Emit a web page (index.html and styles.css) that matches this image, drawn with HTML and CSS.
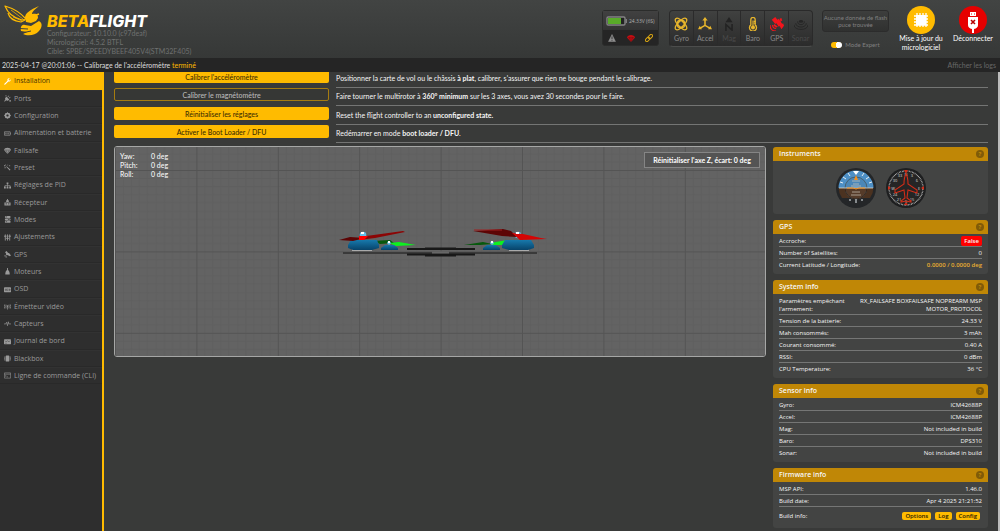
FILE: index.html
```html
<!DOCTYPE html>
<html lang="fr">
<head>
<meta charset="utf-8">
<title>Betaflight Configurator</title>
<link rel="stylesheet" href="styles.css">
</head>
<body>
<header class="topbar">
  <div class="brand">
    <svg class="bee" viewBox="0 0 40 32" aria-hidden="true">
      <g fill="none" stroke="#ffbb00" stroke-width="1.200" stroke-linejoin="round">
        <path d="M1 1 C8 3 15 6 22 14 L18 15 C10 13 4 9 1 1Z"/>
        <path d="M4 8 C5 12 9 16 17 17 L21 15"/>
        <path d="M7 5 L19 14 M9 12 L18 16" stroke-width=".7"/>
      </g>
      <path fill="#ffbb00" d="M21 13 C21 8 26 5 35 1 C30 5 28 7 28 9 C33 8 34 10 34 13 L32 16 L27 18 L22 17Z"/>
      <path fill="#ffbb00" d="M35 16 C39 18 38 23 35 26 C31 31 23 31 19 29 L23 27 L17 26 C16 22 18 19 21 20 L27 21Z"/>
      <path d="M16 23.500 L24 24 M18 28 L27 26" stroke="#3c3e3d" stroke-width="1"/>
      <path d="M29 11 L35 9" stroke="#ffbb00" stroke-width="1.500"/>
    </svg>
    <div>
      <h1 class="wordmark"><span>BETA</span>FLIGHT</h1>
      <p class="versions">Configurateur: 10.10.0 (c97deaf)<br>Micrologiciel: 4.5.2 BTFL<br>Cible: SPBE/SPEEDYBEEF405V4(STM32F405)</p>
    </div>
  </div>
  <div class="power">
    <div class="power-top">
      <svg class="battery" viewBox="0 0 21 10" aria-hidden="true"><rect x="1" y="1" width="18" height="8" rx="1.2" fill="#222" stroke="#858585" stroke-width="1.4"/><rect x="2" y="2" width="13" height="6" fill="#59aa29"/><path d="M20.3 3v4" stroke="#858585" stroke-width="1.2"/></svg>
      <span>24.33V (6S)</span>
    </div>
    <div class="power-bottom">
      <svg viewBox="0 0 16 16" aria-hidden="true"><path d="M8 1 L15 15 H1Z" fill="#8f8f8f" stroke="#8f8f8f" stroke-linejoin="round"/><path d="M8 5v5M8 11.5v2" stroke="#242424" stroke-width="1.6"/></svg>
      <svg viewBox="0 0 16 16" aria-hidden="true"><path d="M0 7 C1 0 15 0 16 7 L9 15 H7Z" fill="#c40d12"/><path d="M2 7.500h12M5 7l2 7M11 7l-2 7" stroke="#510b0c" stroke-width=".8" fill="none"/></svg>
      <svg viewBox="0 0 16 16" aria-hidden="true"><g fill="none" stroke="#d8a514" stroke-width="2" transform="rotate(-45 8 8)"><rect x="-1" y="5" width="10" height="6" rx="3"/><rect x="7" y="5" width="10" height="6" rx="3"/></g></svg>
    </div>
  </div>
  <ul class="sensors">
    <li><svg viewBox="0 0 16 16" aria-hidden="true"><g fill="none" stroke="#e7b52c" stroke-width="1.5"><ellipse cx="8" cy="8" rx="8.5" ry="3.2" transform="rotate(45 8 8)"/><ellipse cx="8" cy="8" rx="8.5" ry="3.2" transform="rotate(-45 8 8)"/><rect x="4" y="4" width="8" height="8" rx="3"/></g></svg><span>Gyro</span></li>
    <li><svg viewBox="0 0 16 16" aria-hidden="true"><path d="M8 2v8M8 9.500L2 13M8 9.500L14 13" stroke="#e7b52c" stroke-width="1.8"/><path d="M8 0l3 4H5ZM0 14l2-4 2.500 4ZM16 14l-2-4-2.500 4Z" fill="#e7b52c"/></svg><span>Accel</span></li>
    <li class="off"><svg viewBox="0 0 16 16" aria-hidden="true"><path d="M8 0l4 6H4Z" fill="#232323"/><path d="M4.500 16V8.500L11.500 15V8" fill="none" stroke="#232323" stroke-width="1.800"/></svg><span>Mag</span></li>
    <li><svg viewBox="0 0 16 16" aria-hidden="true"><path d="M5.500 9V3a2.500 2.500 0 0 1 5 0V9a4 4 0 1 1-5 0Z" fill="none" stroke="#e7b52c" stroke-width="1.5"/><circle cx="8" cy="12" r="2.300" fill="#e7b52c"/><path d="M8 4v8M9 5h2M9 7h2" stroke="#e7b52c" stroke-width="1.300"/></svg><span>Baro</span></li>
    <li><svg viewBox="0 0 16 16" aria-hidden="true"><g fill="#f4141c"><path d="M2 3l4-3 4 5-4 3ZM11 10l4-3 1 3-3 4ZM6 5l4-3 4 6-4 3ZM11 2l2-1 1 3-2 1Z"/><path d="M5 8l4 3-2 1-3-2Z"/></g><path d="M3 9q0 4 4 4M0 9q0 7 7 7" fill="none" stroke="#f4141c" stroke-width="1.400"/></svg><span>GPS</span></li>
    <li class="off"><svg viewBox="0 0 16 16" aria-hidden="true"><ellipse cx="8" cy="5" rx="2.500" ry="1.500" fill="#262626"/><path d="M4 5c0 5 8 5 8 0M2 7c0 6 12 6 12 0M0 9c0 7 16 7 16 0" fill="none" stroke="#262626"/></svg><span>Sonar</span></li>
  </ul>
  <div class="flash-col">
    <p class="flash">Aucune donnée de flash<br>puce trouvée</p>
    <label class="expert"><input type="checkbox" role="switch" checked>Mode Expert</label>
  </div>
  <div class="actions">
    <button class="action" type="button">
      <svg viewBox="0 0 28 28" aria-hidden="true"><circle cx="14" cy="14" r="14" fill="#ffbb00"/><path d="M10 7v14M13 7v14M16 7v14M19 7v14M7 10h14M7 13h14M7 16h14M7 19h14" stroke="#fff" stroke-width="1.300"/><rect x="9" y="9" width="10" height="10" rx="1" fill="#fff"/></svg>
      <span>Mise à jour du micrologiciel</span>
    </button>
    <button class="action" type="button">
      <svg viewBox="0 0 28 28" aria-hidden="true"><circle cx="14" cy="14" r="14" fill="#e60000"/><path d="M11 6h6v4h-6ZM9 11h10v8q0 3-4 4v4h-2v-4q-4-1-4-4Z" fill="#fff"/><path d="M12 8h1M15 8h1" stroke="#e60000"/><path d="M12 14l4 4M16 14l-4 4" stroke="#b80000" stroke-width="1.600"/></svg>
      <span>Déconnecter</span>
    </button>
  </div>
</header>
<div class="logbar">
  <p>2025-04-17 @20:01:06 -- Calibrage de l'accéléromètre <span class="done">terminé</span></p>
  <a href="#logs">Afficher les logs</a>
</div>
<div class="shell">
  <nav class="tabs">
    <a class="active" href="#setup"><svg viewBox="0 0 16 16"><path d="M1 13L8 6C7 3 9 0 13 1L10 4l2 2 3-3c1 4-2 6-5 5l-7 7c-2 1-3-1-2-2Z"/></svg>Installation</a>
    <a href="#ports"><svg viewBox="0 0 16 16"><path d="M0 14l3-3C1 7 4 5 6 4l6 6c-2 3-5 4-7 2l-3 3ZM8 4l3-3 1 1-3 3ZM11 7l3-3 1 1-3 3ZM3 1h3v2H3ZM12 12h4v3h-4Z"/></svg>Ports</a>
    <a href="#configuration"><svg viewBox="0 0 16 16"><circle cx="8" cy="8" r="4.500" fill="none" stroke="currentColor" stroke-width="4"/><path d="M7 0h2v16H7ZM0 7h16v2H0Z" opacity=".7"/><path d="M2 3l1-1 11 11-1 1ZM13 2l1 1L3 14l-1-1Z" opacity=".7"/><circle cx="8" cy="8" r="2.500" fill="#2e2e2e"/></svg>Configuration</a>
    <a href="#power"><svg viewBox="0 0 16 16"><path d="M1 4h13v8H1ZM4 6v4M7 6v4M10 6v4M15 6v4" fill="none" stroke="currentColor" stroke-width="1.500"/></svg>Alimentation et batterie</a>
    <a href="#failsafe"><svg viewBox="0 0 16 16"><path d="M0 7C1 0 15 0 16 7L9 15H7Z"/><path d="M1 7h14M5 8l2 5M11 8l-2 5" stroke="#2e2e2e"/></svg>Failsafe</a>
    <a href="#preset"><svg viewBox="0 0 16 16"><path d="M6 5l9 8-2 2-8-9ZM4 0l1 3H3ZM0 3h3v2H0ZM8 1l2 1-2 2ZM1 8l2-1 1 2-2 1ZM12 3h2v2h-2Z"/></svg>Preset</a>
    <a href="#pid"><svg viewBox="0 0 16 16"><path d="M6 1h4v4H6ZM0 10h4v5H0ZM6 10h4v5H6ZM12 10h4v5h-4Z"/><path d="M8 4v7M2 11V8h12v3" fill="none" stroke="currentColor" stroke-width="1.300"/></svg>Réglages de PID</a>
    <a href="#receiver"><svg viewBox="0 0 16 16"><path d="M1 8h14v7H1ZM5 3h6v4H5ZM7 0h2v4H7Z"/><circle cx="5" cy="11" r="1.500" fill="#2e2e2e"/><circle cx="11" cy="11" r="1.500" fill="#2e2e2e"/></svg>Récepteur</a>
    <a href="#modes"><svg viewBox="0 0 16 16"><rect x="2" y="0" width="13" height="4.500" rx="2"/><rect x="2" y="5.500" width="13" height="4.500" rx="2"/><rect x="2" y="11" width="13" height="4.500" rx="2"/><path d="M4 2h3M9 8h4M4 13h3" stroke="#2e2e2e" stroke-width="1.500"/></svg>Modes</a>
    <a href="#adjustments"><svg viewBox="0 0 16 16"><path d="M3 1v14M8 1v14M13 1v14M0 5h6M5 10h6M10 5h6" stroke="currentColor" stroke-width="2"/></svg>Ajustements</a>
    <a href="#gps"><svg viewBox="0 0 16 16"><path d="M2 3l4-3 3 4 3 1 4 5-3 2-5-3-2 1-2-3 1-2Z"/><path d="M1 9q0 6 6 6M3 9q0 4 4 4" fill="none" stroke="currentColor"/></svg>GPS</a>
    <a href="#motors"><svg viewBox="0 0 16 16"><path d="M7 0h2v4q4 4 4 8v3H3v-3q0-4 4-8Z"/></svg>Moteurs</a>
    <a href="#osd"><svg viewBox="0 0 16 16"><rect y="3" width="16" height="11" rx="1"/><path d="M3 7h3v3H3ZM7 7h3M7 10h3M12 7h2v3h-2Z" fill="none" stroke="#2e2e2e"/></svg>OSD</a>
    <a href="#vtx"><svg viewBox="0 0 16 16"><path d="M2 3q-3 5 0 10M5 4q-2 4 0 8M14 3q3 5 0 10M11 4q2 4 0 8M8 8v7" fill="none" stroke="currentColor" stroke-width="1.500"/><circle cx="8" cy="7" r="2"/></svg>Émetteur vidéo</a>
    <a href="#sensors"><svg viewBox="0 0 16 16"><path d="M0 9h4l2-4 2 8 2-9 1 5h5" fill="none" stroke="currentColor" stroke-width="1.500"/></svg>Capteurs</a>
    <a href="#logging"><svg viewBox="0 0 16 16"><rect y="3" width="16" height="11" rx="1"/><path d="M2 6l3 3 3-3 3 3 3-3M3 12h3" fill="none" stroke="#2e2e2e"/></svg>Journal de bord</a>
    <a href="#blackbox"><svg viewBox="0 0 16 16"><rect x="4" y="1" width="8" height="14" rx="1"/><path d="M2 3v10M14 3v10M0 6v4M16 6v4" stroke="currentColor" stroke-width="1.500"/></svg>Blackbox</a>
    <a href="#cli"><svg viewBox="0 0 16 16"><path d="M1 2h14v12H1ZM1 5h14M3 8l2 1-2 1M6 11h3" fill="none" stroke="currentColor" stroke-width="1.300"/></svg>Ligne de commande (CLI)</a>
  </nav>
  <main class="content">
    <section class="tasks">
      <div class="task"><button type="button">Calibrer l'accéléromètre</button><p>Positionner la carte de vol ou le châssis <b>à plat</b>, calibrer, s'assurer que rien ne bouge pendant le calibrage.</p></div>
      <div class="task"><button type="button" class="outline">Calibrer le magnétomètre</button><p>Faire tourner le multirotor à <b>360° minimum</b> sur les 3 axes, vous avez 30 secondes pour le faire.</p></div>
      <div class="task"><button type="button">Réinitialiser les réglages</button><p>Reset the flight controller to an <b>unconfigured state.</b></p></div>
      <div class="task"><button type="button">Activer le Boot Loader / DFU</button><p>Redémarrer en mode <b>boot loader / DFU</b>.</p></div>
    </section>
    <div class="columns">
      <section class="model">
        <svg class="scene" viewBox="0 0 650 209" preserveAspectRatio="xMidYMid slice" aria-hidden="true">
          <defs>
            <pattern id="grid" x="0" y="23" width="81.400" height="81.400" patternUnits="userSpaceOnUse">
              <path d="M8.500 0v82M16.500 0v82M24.500 0v82M32.500 0v82M41.500 0v82M49.500 0v82M57.500 0v82M65.500 0v82M73.500 0v82M0 8.500h82M0 16.500h82M0 24.500h82M0 32.500h82M0 41.500h82M0 49.500h82M0 57.500h82M0 65.500h82M0 73.500h82" stroke="#5f5f5f"/>
              <path d="M.5 0v82M0 .5h82" stroke="#545454"/>
            </pattern>
            <linearGradient id="motor" x2="0" y2="1"><stop offset="0" stop-color="#1779ac"/><stop offset="1" stop-color="#07436a"/></linearGradient>
          </defs>
          <rect width="650" height="209" fill="#636363"/>
          <rect width="650" height="209" fill="url(#grid)"/>
          <path d="M228 106H422" stroke="#3a3a3a" stroke-width="2"/>
          <path d="M292 102H360M292 107.500H360" stroke="#181818" stroke-width="2"/>
          <path d="M310 101.500H341M310 108.500H341" stroke="#181818" stroke-width="2"/>
          <path d="M317 105.500h17" stroke="#666" stroke-width="2"/>
          <path d="M237 102h20v2h-20ZM394 102h20v2h-20Z" fill="#aaa"/>
          <path d="M258 94l17-1 4 3-14 1Z" fill="#07590d"/><path d="M274 96l10-1 17 3-20 1Z" fill="#0df020"/>
          <path d="M349 98l19-3 9 2-12 1Z" fill="#07590d"/><path d="M375 96l17-3v5h-14Z" fill="#0df020"/>
          <g fill="url(#motor)">
            <path d="M236 93h26l2 5v3l-7 2h-19l-5-2v-3Z"/>
            <path d="M270 98h9l4 3v2h-17v-2Z"/>
            <path d="M372 98h9l4 3v2h-17v-2Z"/>
            <path d="M390 93h26l3 5v3l-6 2h-19l-7-2v-3Z"/>
          </g>
          <g fill="#62bfe8"><circle cx="248" cy="88" r="3.300"/><circle cx="274" cy="96" r="1.800"/><circle cx="377" cy="96" r="1.800"/><circle cx="403" cy="88" r="3.300"/></g>
          <path d="M224 93l11-3 15 1-12 3Z" fill="#5d0505"/><path d="M244 90l44-6 2 1-30 6-16 2Z" fill="#8c0505"/><path d="M244 89h9l-4 4h-5Z" fill="#f00"/>
          <path d="M358 84l30-2 8 2 6 6-15-1Z" fill="#5d0505"/><path d="M397 86l11 1 18 4 6 1-27 1Z" fill="#d40505"/>
          <path d="M359 83h28" stroke="#a12020"/>
          <path d="M246 86h3M273 95h2M376 95h2M401 86h3" stroke="#fff" stroke-width="2"/>
        </svg>
        <dl class="attitude"><dt>Yaw:</dt><dd>0 deg</dd><dt>Pitch:</dt><dd>0 deg</dd><dt>Roll:</dt><dd>0 deg</dd></dl>
        <button type="button" class="reset">Réinitialiser l'axe Z, écart: 0 deg</button>
      </section>
      <aside class="panels">
        <section class="panel">
          <h2>Instruments<button type="button" class="help" aria-label="Aide">?</button></h2>
          <div class="gauges">
            <svg viewBox="0 0 40 40" aria-hidden="true">
              <circle cx="20" cy="20" r="20" fill="#242628"/>
              <path d="M2.500 20a17.500 17.500 0 0 1 35 0Z" fill="#4d8fc5"/><path d="M2.500 20a17.500 17.500 0 0 0 3.500 10h28a17.500 17.500 0 0 0 3.500-10Z" fill="#4b3220"/>
              <path d="M9 20a11 11 0 0 1 22 0Z" fill="#4b87b8"/><path d="M9 20a11 11 0 0 0 22 0Z" fill="#553b29"/>
              <circle cx="20" cy="20" r="11" fill="none" stroke="#49606e"/><path d="M9 20a11 11 0 0 0 22 0" fill="none" stroke="#392619"/>
              <path d="M3 20h34" stroke="#e3d9c7" stroke-width=".8"/><path d="M11 20h6l3 1 3-1h6" fill="none" stroke="#f39020"/>
              <path d="M16 13h8M17 16h6M15 18h10M16 24h8M15 27h10" stroke="#cfc7bb" stroke-width=".7"/>
              <path d="M17 3h6l-3 4Z" fill="#fff"/><path d="M20 7l2 5h-4Z" fill="#f39020"/>
              <path d="M12 5l2 3M28 5l-2 3M7 9l3 2M33 9l-3 2M4 14l3 1M36 14l-3 1M20 31v4M14 31v2M26 31v2" stroke="#e8eef2"/>
            </svg>
            <svg viewBox="0 0 40 40" aria-hidden="true">
              <circle cx="20" cy="20" r="20" fill="#1e1f20"/><circle cx="20" cy="20" r="17" fill="#252525" stroke="#d6d6d6" stroke-width="1.400" stroke-dasharray=".6 .88"/>
              <g fill="#d8d8d8" font-size="4" text-anchor="middle"><text x="20" y="8">N</text><text x="26" y="9">3</text><text x="31" y="14">6</text><text x="33" y="22">E</text><text x="31" y="28">12</text><text x="26" y="33">15</text><text x="20" y="35">S</text><text x="13" y="33">21</text><text x="9" y="28">24</text><text x="7" y="22">W</text><text x="9" y="14">30</text><text x="14" y="9">33</text></g>
              <path d="M20 6c-2 3-2 6-2 10L9 22v3l9-3 1 8-4 3v1l5-1 5 1v-1l-4-3 1-8 9 3v-3l-9-6c0-4 0-7-2-10Z" fill="none" stroke="#cf2d19" stroke-width="1.100"/>
              <path d="M18 2h4l-2 4ZM20 34l2 3h-4ZM2 18l3 2-3 2ZM38 18l-3 2 3 2Z" fill="#cf2d19"/>
            </svg>
          </div>
        </section>
        <section class="panel">
          <h2>GPS<button type="button" class="help" aria-label="Aide">?</button></h2>
          <table><tr><th>Accroche:</th><td><span class="bad">False</span></td></tr><tr><th>Number of Satellites:</th><td>0</td></tr><tr><th>Current Latitude / Longitude:</th><td><a class="coords" href="#map">0.0000 / 0.0000 deg</a></td></tr></table>
        </section>
        <section class="panel">
          <h2>System info<button type="button" class="help" aria-label="Aide">?</button></h2>
          <table><tr class="double"><th>Paramètres empêchant l'armement:</th><td class="flags"><span>RX_FAILSAFE</span> <span>BOXFAILSAFE</span> <span>NOPREARM</span> <span>MSP</span> <span>MOTOR_PROTOCOL</span></td></tr><tr><th>Tension de la batterie:</th><td>24.33 V</td></tr><tr><th>Mah consommés:</th><td>3 mAh</td></tr><tr><th>Courant consommé:</th><td>0.40 A</td></tr><tr><th>RSSI:</th><td>0 dBm</td></tr><tr><th>CPU Temperature:</th><td>36 °C</td></tr></table>
        </section>
        <section class="panel">
          <h2>Sensor info<button type="button" class="help" aria-label="Aide">?</button></h2>
          <table><tr><th>Gyro:</th><td>ICM42688P</td></tr><tr><th>Accel:</th><td>ICM42688P</td></tr><tr><th>Mag:</th><td>Not included in build</td></tr><tr><th>Baro:</th><td>DPS310</td></tr><tr><th>Sonar:</th><td>Not included in build</td></tr></table>
        </section>
        <section class="panel">
          <h2>Firmware info<button type="button" class="help" aria-label="Aide">?</button></h2>
          <table><tr><th>MSP API:</th><td>1.46.0</td></tr><tr><th>Build date:</th><td>Apr 4 2025 21:21:52</td></tr><tr class="links"><th>Build info:</th><td><a class="chip" href="#options">Options</a><a class="chip" href="#log">Log</a><a class="chip" href="#config">Config</a></td></tr></table>
        </section>
      </aside>
    </div>
  </main>
</div>
</body>
</html>
```
FILE: styles.css
```css
* { box-sizing: border-box; }
body {
  margin: 0;
  min-height: 100vh;
  display: flex;
  flex-direction: column;
  background: #393a39;
  color: #f6f6f6;
  font: 7px/8px Lato, "Open Sans", sans-serif;
}
h1, h2, p, ul, dl, dd { margin: 0; padding: 0; }
button { font: inherit; padding: 0; border: 0; cursor: pointer; }
a { color: inherit; text-decoration: none; }
svg { display: block; flex: none; }

/* Header */
.topbar {
  display: flex;
  align-items: flex-start;
  height: 58px;
  background: linear-gradient(#424443, #363837);
}
.brand { display: flex; gap: 3px; margin: 5px auto 0 4px; }
.bee { width: 40px; height: 32px; }
.wordmark {
  margin-top: 8px;
  font-family: Inter, sans-serif;
  font-size: 16px;
  font-weight: 800;
  font-style: italic;
  line-height: 16px;
  color: #fff;
}
.wordmark span { color: #ffbb00; }
.versions { line-height: 9px; color: #6f7170; }
.power {
  width: 57px;
  margin: 10px 10px 0 0;
  border: 1px solid #2b2c2b;
  border-radius: 3px;
  background: #252525;
}
.power-top {
  display: flex;
  align-items: center;
  gap: 2px;
  height: 19px;
  padding-left: 3px;
  background: linear-gradient(#414141, #333);
  color: #b0b0b0;
  font-family: "Open Sans", sans-serif;
  font-size: 5px;
  white-space: nowrap;
}
.battery { width: 21px; height: 10px; }
.power-bottom { display: flex; justify-content: space-between; align-items: center; height: 15px; padding: 0 5px; }
.power-bottom svg { width: 8px; height: 8px; }
.sensors {
  display: flex;
  width: 144px;
  height: 37px;
  margin: 10px 9px 0 0;
  border: 1px solid #2a2a2a;
  border-bottom-color: #4c4d4c;
  border-radius: 4px;
  background: linear-gradient(#404140, #2b2b2b);
  list-style: none;
  overflow: hidden;
}
.sensors li {
  flex: 1;
  display: flex;
  flex-direction: column;
  align-items: center;
  gap: 3px;
  padding-top: 6px;
  border-right: 1px solid #2b2b2b;
  color: #8a8a8a;
}
.sensors li:last-child { border-right: 0; }
.sensors .off { color: #4a4a4a; }
.sensors svg { width: 14px; height: 14px; }
.flash-col {
  display: flex;
  flex-direction: column;
  align-items: center;
  gap: 9px;
  width: 67px;
  margin: 10px 6px 0 0;
  font-size: 6px;
  line-height: 7px;
  color: #808080;
}
.flash {
  width: 100%;
  padding: 3px 0;
  border: 1px solid #2c2c2c;
  border-radius: 3px;
  background: linear-gradient(#3d3e3d, #303130);
  text-align: center;
}
.expert { display: flex; align-items: center; gap: 3px; }
.expert input {
  appearance: none;
  width: 11px;
  height: 6px;
  margin: 0;
  border-radius: 3px;
  background: radial-gradient(circle at 8px 3px, #fff 3px, #ffbb00 3px);
}
.actions { display: flex; margin: 6px 1px 0 0; }
.action {
  display: flex;
  flex-direction: column;
  align-items: center;
  width: 52px;
  background: none;
  color: #fff;
  line-height: 9px;
}
.action svg { width: 28px; height: 28px; }

/* Log line */
.logbar {
  position: relative;
  z-index: 1;
  display: flex;
  justify-content: space-between;
  align-items: center;
  height: 14px;
  padding: 0 4px 0 2px;
  background: #252525;
  color: #dedede;
}
.logbar a { color: #686868; }
.done { color: #ffbb00; }

/* Tab list */
.shell { flex: 1; display: flex; }
.tabs {
  flex: none;
  width: 104px;
  border-right: 2px solid #ffbb00;
  background: #2e2e2e;
  font-family: "Open Sans", sans-serif;
}
.tabs a {
  display: flex;
  align-items: center;
  gap: 3px;
  height: 17px;
  padding-left: 4px;
  box-shadow: inset 0 -1px #292929, inset 0 1px #323232;
  color: #9a9a9a;
}
.tabs a:nth-child(3n+1) { height: 18px; }
.tabs svg { width: 7px; height: 7px; fill: currentColor; }
.tabs .active { background: #ffbb00; box-shadow: none; color: #463500; }
.tabs .active svg { color: #fff; }

/* Setup tab */
.content { flex: 1; min-width: 0; padding: 0 10px 2px 10px; border-right: 2px solid #bcbcbc; }
.tasks { display: grid; gap: 5px; margin-top: -2px; }
.task { display: grid; grid-template-columns: 33fr 100fr; gap: 7px; height: 13px; }
.task:nth-child(3) { height: 14px; padding-top: 1px; }
.task button {
  height: 13px;
  border-radius: 2px;
  background: #ffbb00;
  color: #3c2d00;
  font-weight: 500;
}
.task .outline { border: 1px solid #a67c10; background: #363735; color: #bababa; }
.task p { height: 18px; padding-top: 4px; line-height: 9px; border-bottom: 1px solid #747574; }
.columns { display: flex; align-items: flex-start; gap: 7px; margin-top: 8px; }
.model {
  position: relative;
  flex: 1;
  display: flex;
  justify-content: space-between;
  align-items: flex-start;
  min-height: 211px;
  padding: 5px;
  border: 1px solid #a6a7a6;
  border-radius: 3px;
  overflow: hidden;
}
.scene { position: absolute; inset: 0; width: 100%; height: 100%; }
.attitude { position: relative; display: grid; grid-template-columns: 31px auto; line-height: 9px; font-weight: 500; }
.reset {
  position: relative;
  height: 16px;
  padding: 0 8px;
  border: 1px solid #858585;
  background: #545454;
  color: #fff;
  font-weight: 700;
}
.panels { display: grid; gap: 6px; width: 215px; margin-top: 1px; font-family: "Open Sans", sans-serif; }
.panel { border-radius: 3px; background: #434443; overflow: hidden; }
.panel h2 {
  display: flex;
  justify-content: space-between;
  align-items: center;
  height: 14px;
  padding: 0 4px 0 6px;
  background: #c08706;
  font-size: 7px;
  font-weight: 600;
}
.help {
  width: 8px;
  height: 8px;
  border-radius: 50%;
  background: #805b08;
  color: #c08706;
  font-size: 6px;
  font-weight: 700;
  line-height: 8px;
}
.gauges { display: flex; justify-content: center; gap: 10px; padding: 7px 0 6px; }
.gauges svg { width: 40px; height: 40px; }
.panel table {
  width: 100%;
  padding: 1px 6px 3px;
  border-spacing: 0;
  font-size: 6px;
}
th, td { height: 12px; padding: 0; border-bottom: 1px solid #757675; font-weight: 400; text-align: left; }
td { text-align: right; }
tr:last-child > * { border-bottom: 0; }
.double > * { height: 20px; }
.double th { width: 76px; }
.links > * { height: 18px; }
.bad { padding: 1px 3px; border-radius: 2px; background: #f00; font-weight: 600; }
.coords { color: #e9ad31; font-weight: 600; }
.chip {
  display: inline-block;
  margin: 0 2px;
  padding: 0 3px;
  border-radius: 2px;
  background: #ffbb00;
  color: #2b2000;
  font-weight: 600;
}
```
